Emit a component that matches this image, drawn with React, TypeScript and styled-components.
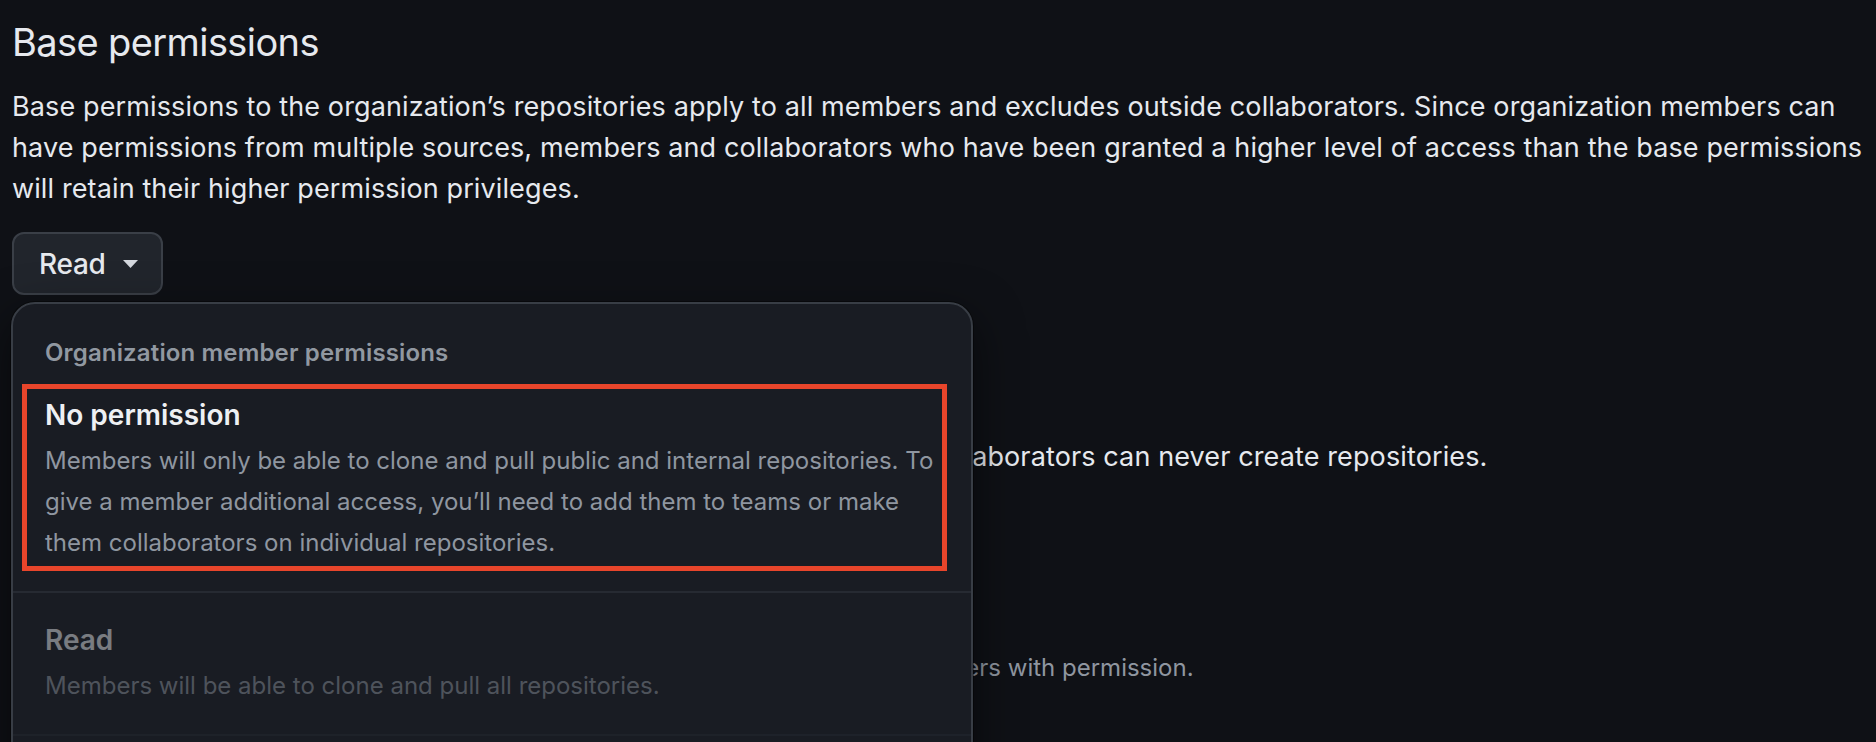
import React from "react";
import styled, { createGlobalStyle } from "styled-components";

const Global = createGlobalStyle`
  html, body {
    margin: 0;
    padding: 0;
    overflow: hidden;
    background: #0f1116;
  }
  body {
    font-family: Inter, "Noto Sans", "Liberation Sans", sans-serif;
    color: #e6e9ee;
    -webkit-font-smoothing: antialiased;
  }
`;

const Page = styled.main`
  padding: 17px 12px 0 12px;
  height: 742px;
  box-sizing: border-box;
`;

const Title = styled.h2`
  margin: 0;
  font-size: 38px;
  line-height: 50px;
  font-weight: 400;
  letter-spacing: -0.6px;
  color: #e6e9ee;
`;

const Lead = styled.p<{ $top?: number }>`
  margin: ${(p) => p.$top ?? 20}px 0 0 0;
  font-size: 27px;
  line-height: 40.8px;
  letter-spacing: 0.12px;
  color: #e6e9ee;
`;

const MenuAnchor = styled.div`
  position: relative;
  margin-top: 23px;
  width: fit-content;
`;

const SelectButton = styled.button`
  display: flex;
  align-items: center;
  gap: 17px;
  height: 63px;
  padding: 0 23px 0 25px;
  box-sizing: border-box;
  border: 2px solid #3a3f47;
  border-radius: 12px;
  background: #21252c;
  color: #e6e9ee;
  font-family: inherit;
  font-size: 28px;
  font-weight: 500;
  letter-spacing: -0.3px;
`;

const Caret = styled.svg`
  width: 15px;
  height: 8px;
  display: block;
`;

const Menu = styled.div`
  position: absolute;
  top: calc(100% + 7px);
  left: -1px;
  width: 962px;
  box-sizing: border-box;
  background: #191c23;
  border: 2px solid #383d45;
  border-radius: 24px;
  box-shadow: 0 0 0 1px rgba(0, 0, 0, 0.4), 0 16px 48px rgba(0, 0, 0, 0.55);
  z-index: 10;
  overflow: hidden;
`;

const MenuHeader = styled.div`
  padding: 34px 32px 0 32px;
  font-size: 24px;
  line-height: 30px;
  font-weight: 600;
  letter-spacing: 0.15px;
  color: #9198a1;
`;

const Option = styled.div<{ $faded?: boolean }>`
  position: relative;
  padding: 27px 32px 28px 32px;
  border-bottom: 2px solid #262a32;
  opacity: ${(p) => (p.$faded ? 0.45 : 1)};
`;

const OptionTitle = styled.div`
  font-size: 28px;
  line-height: 40px;
  font-weight: 600;
  color: #eef0f3;
`;

const OptionText = styled.div`
  margin-top: 5px;
  font-size: 24px;
  line-height: 41px;
  color: #8f96a0;
`;

const Highlight = styled.span`
  position: absolute;
  left: 9px;
  right: 24px;
  top: 16px;
  bottom: 20px;
  border: 5px solid #e8452b;
  pointer-events: none;
`;

const SectionTitle = styled.h3`
  margin: 72px 0 0 0;
  font-size: 38px;
  line-height: 50px;
  font-weight: 400;
  letter-spacing: -0.6px;
`;

const CheckList = styled.div`
  margin-top: 16px;
  display: flex;
  flex-direction: column;
  gap: 40px;
`;

const CheckItem = styled.label`
  display: flex;
  flex-direction: column;
  padding-left: 40px;
`;

const CheckLabel = styled.span`
  font-size: 27px;
  line-height: 40px;
  font-weight: 600;
`;

const CheckNote = styled.span`
  font-size: 24px;
  line-height: 36px;
  color: #8f96a0;
`;

export default function App() {
  return (
    <>
      <Global />
      <Page>
        <Title>Base permissions</Title>
        <Lead>
          Base permissions to the organization’s repositories apply to all members and excludes outside
          collaborators. Since organization members can have permissions from multiple sources, members and
          collaborators who have been granted a higher level of access than the base permissions will retain
          their higher permission privileges.
        </Lead>
        <MenuAnchor>
          <SelectButton>
            Read
            <Caret viewBox="0 0 15 8">
              <polygon points="0,0 15,0 7.5,8" fill="#d4d8de" />
            </Caret>
          </SelectButton>
          <Menu>
            <MenuHeader>Organization member permissions</MenuHeader>
            <Option>
              <Highlight />
              <OptionTitle>No permission</OptionTitle>
              <OptionText>
                Members will only be able to clone and pull public and internal repositories. To give a member
                additional access, you’ll need to add them to teams or make them collaborators on individual
                repositories.
              </OptionText>
            </Option>
            <Option $faded>
              <OptionTitle>Read</OptionTitle>
              <OptionText>Members will be able to clone and pull all repositories.</OptionText>
            </Option>
            <Option>
              <OptionTitle>Write</OptionTitle>
              <OptionText>Members will be able to clone, pull, and push all repositories.</OptionText>
            </Option>
          </Menu>
        </MenuAnchor>
        <SectionTitle>Repository creation</SectionTitle>
        <Lead $top={20}>
          Members will be able to create only selected repository types. Outside collaborators can never create
          repositories.
        </Lead>
        <CheckList>
          <CheckItem>
            <CheckLabel>Public</CheckLabel>
            <CheckNote>Members will be able to create public repositories, visible to anyone.</CheckNote>
          </CheckItem>
          <CheckItem>
            <CheckLabel>Private</CheckLabel>
            <CheckNote>
              Members will be able to create private repositories, visible to organization members with permission.
            </CheckNote>
          </CheckItem>
        </CheckList>
      </Page>
    </>
  );
}
